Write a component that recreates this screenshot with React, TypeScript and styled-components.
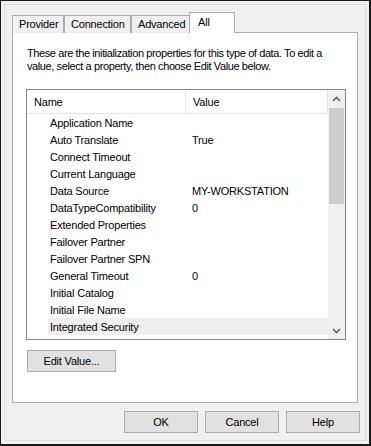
import React from 'react'
import styled, { createGlobalStyle } from 'styled-components'

const GLOBAL = createGlobalStyle`
    html, body {
        margin: 0;
        padding: 0;
        background: #f0f0f0;
    }
    body {
        font-family: "Liberation Sans", Arial, sans-serif;
        font-size: 11px;
        letter-spacing: -0.2px;
        color: #000;
    }
`

const WINDOW = styled.div`
    box-sizing: border-box;
    width: 371px;
    height: 446px;
    border-style: solid;
    border-color: #1a1a1a;
    border-width: 1px 2px 2px 1px;
    background: #f0f0f0;
    padding: 3px;
    display: flex;
`

const FRAME = styled.div`
    flex: 1;
    min-width: 0;
    border: 1px solid #dcdcdc;
    padding: 7px 7px 0 7px;
    display: flex;
    flex-direction: column;
`

const TABROW = styled.div`
    display: flex;
    align-items: flex-end;
    height: 21px;
    margin-bottom: -1px;
    position: relative;
    z-index: 1;
`

const TAB = styled.div<{ w: number; active?: boolean }>`
    box-sizing: border-box;
    width: ${p => p.w}px;
    height: ${p => (p.active ? 21 : 18)}px;
    margin-left: ${p => (p.active ? -1 : 0)}px;
    border: 1px solid #adadad;
    border-bottom: none;
    background: ${p => (p.active ? '#fff' : '#f0f0f0')};
    padding: ${p => (p.active ? '3px 0 0 8px' : '2px 0 0 6px')};
    line-height: 13px;
    white-space: nowrap;
    overflow: hidden;
    user-select: none;
`

const PANEL = styled.div`
    box-sizing: border-box;
    height: 371px;
    border: 1px solid #adadad;
    background: #fff;
    padding: 14px 14px 0 14px;
    display: flex;
    flex-direction: column;
    align-items: flex-start;
    min-width: 0;
`

// Segoe UI is narrower than Arial; tighten the long sentence a bit more
const INTRO = styled.p`
    margin: 0;
    line-height: 13px;
    letter-spacing: -0.4px;
    white-space: nowrap;
`

const LISTBOX = styled.div`
    box-sizing: border-box;
    width: 320px;
    height: 251px;
    margin: 16px 0 0 -1px;
    border: 1px solid #828790;
    display: flex;
    overflow: hidden;
`

const LISTMAIN = styled.div`
    width: 301px;
    display: flex;
    flex-direction: column;
    overflow: hidden;
`

const HEADER = styled.div`
    display: flex;
    height: 24px;
    box-sizing: border-box;
    border-bottom: 1px solid #e5e5e5;
`

const HEADCELL = styled.div<{ w: number }>`
    box-sizing: border-box;
    width: ${p => p.w}px;
    border-right: 1px solid #e5e5e5;
    padding-left: 7px;
    line-height: 24px;
`

const ROW = styled.div`
    display: flex;
    height: 17px;
    padding-left: 21px;
`

const ROWBODY = styled.div<{ selected?: boolean }>`
    flex: 1;
    display: grid;
    grid-template-columns: 144px 1fr;
    background: ${p => (p.selected ? '#eeeeee' : 'transparent')};
    line-height: 18px;
    white-space: nowrap;
`

const NAMECELL = styled.span`
    padding-left: 2px;
`

const VALUECELL = styled.span``

const SCROLLBAR = styled.div`
    width: 17px;
    background: #f0f0f0;
    display: flex;
    flex-direction: column;
`

const ARROW = styled.div`
    height: 17px;
    display: flex;
    align-items: center;
    justify-content: center;
`

const TRACK = styled.div`
    flex: 1;
    padding: 1px 1px 0 1px;
`

const THUMB = styled.div`
    height: 96px;
    background: #cdcdcd;
`

const BUTTON = styled.button<{ w: number }>`
    box-sizing: border-box;
    width: ${p => p.w}px;
    height: 22px;
    margin: 0;
    border: 1px solid #adadad;
    background: #e1e1e1;
    font-family: "Liberation Sans", Arial, sans-serif;
    font-size: 11px;
    letter-spacing: -0.2px;
    color: #000;
    padding: 0;
`

const EDITBUTTON = styled(BUTTON)`
    margin-top: 10px;
`

const BUTTONROW = styled.div`
    display: flex;
    justify-content: flex-end;
    gap: 7px;
    margin: 8px -2px 0 0;
`

const Chevron = ({ up }: { up?: boolean }) => (
    <svg width="9" height="6" viewBox="0 0 9 6">
        <polyline
            points={up ? '1,5 4.5,1.5 8,5' : '1,1 4.5,4.5 8,1'}
            fill="none"
            stroke="#606060"
            strokeWidth="1.6"
        />
    </svg>
)

const rows: [string, string][] = [
    ['Application Name', ''],
    ['Auto Translate', 'True'],
    ['Connect Timeout', ''],
    ['Current Language', ''],
    ['Data Source', 'MY-WORKSTATION'],
    ['DataTypeCompatibility', '0'],
    ['Extended Properties', ''],
    ['Failover Partner', ''],
    ['Failover Partner SPN', ''],
    ['General Timeout', '0'],
    ['Initial Catalog', ''],
    ['Initial File Name', ''],
    ['Integrated Security', ''],
]

export default function App() {
    return (
        <>
            <GLOBAL />
            <WINDOW>
                <FRAME>
                    <TABROW>
                        <TAB w={52}>Provider</TAB>
                        <TAB w={67}>Connection</TAB>
                        <TAB w={59}>Advanced</TAB>
                        <TAB w={46} active>All</TAB>
                    </TABROW>
                    <PANEL>
                        <INTRO>
                            These are the initialization properties for this type of data. To edit a
                            <br />
                            value, select a property, then choose Edit Value below.
                        </INTRO>
                        <LISTBOX>
                            <LISTMAIN>
                                <HEADER>
                                    <HEADCELL w={159}>Name</HEADCELL>
                                    <HEADCELL w={142}>Value</HEADCELL>
                                </HEADER>
                                {rows.map(([name, value], i) => (
                                    <ROW key={name}>
                                        <ROWBODY selected={i === rows.length - 1}>
                                            <NAMECELL>{name}</NAMECELL>
                                            <VALUECELL>{value}</VALUECELL>
                                        </ROWBODY>
                                    </ROW>
                                ))}
                            </LISTMAIN>
                            <SCROLLBAR>
                                <ARROW><Chevron up /></ARROW>
                                <TRACK><THUMB /></TRACK>
                                <ARROW><Chevron /></ARROW>
                            </SCROLLBAR>
                        </LISTBOX>
                        <EDITBUTTON w={89}>Edit Value...</EDITBUTTON>
                    </PANEL>
                    <BUTTONROW>
                        <BUTTON w={74}>OK</BUTTON>
                        <BUTTON w={74}>Cancel</BUTTON>
                        <BUTTON w={74}>Help</BUTTON>
                    </BUTTONROW>
                </FRAME>
            </WINDOW>
        </>
    )
}
